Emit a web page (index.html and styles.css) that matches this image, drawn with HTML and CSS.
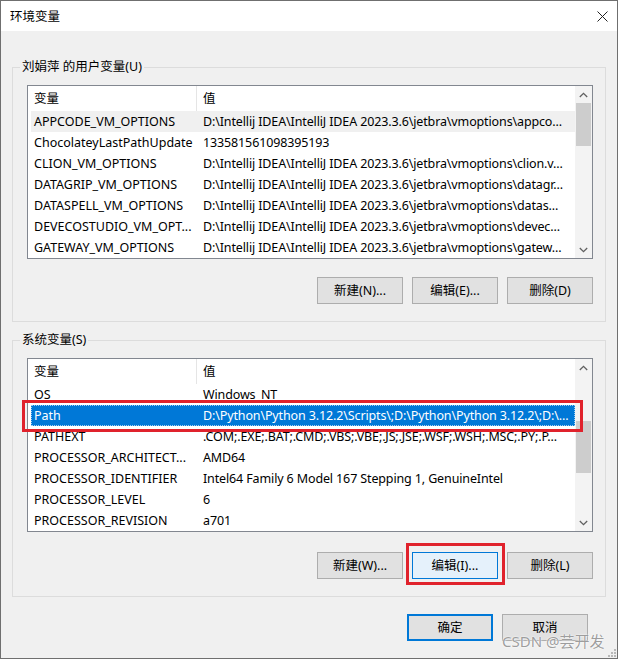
FILE: index.html
```html
<!DOCTYPE html>
<html lang="zh-CN">
<head>
<meta charset="utf-8">
<title>环境变量</title>
<link rel="stylesheet" href="styles.css">
</head>
<body>
<div class="window">
  <div class="titlebar">
    <span class="title">环境变量</span>
    <svg class="close" width="11" height="11" viewBox="0 0 11 11"><path d="M0.5 0.5 L10.5 10.5 M10.5 0.5 L0.5 10.5" stroke="#222" stroke-width="1" fill="none"/></svg>
  </div>
  <div class="content">
    <fieldset class="group">
      <legend>刘娟萍 的用户变量(U)</legend>
      <div class="list">
        <div class="list-main">
          <div class="hdr"><div class="c1">变量</div><div class="c2">值</div></div>
          <div class="row hover"><div class="c1">APPCODE_VM_OPTIONS</div><div class="c2">D:\Intellij IDEA\IntelliJ IDEA 2023.3.6\jetbra\vmoptions\appco...</div></div>
          <div class="row"><div class="c1">ChocolateyLastPathUpdate</div><div class="c2">133581561098395193</div></div>
          <div class="row"><div class="c1">CLION_VM_OPTIONS</div><div class="c2">D:\Intellij IDEA\IntelliJ IDEA 2023.3.6\jetbra\vmoptions\clion.v...</div></div>
          <div class="row"><div class="c1">DATAGRIP_VM_OPTIONS</div><div class="c2">D:\Intellij IDEA\IntelliJ IDEA 2023.3.6\jetbra\vmoptions\datagr...</div></div>
          <div class="row"><div class="c1">DATASPELL_VM_OPTIONS</div><div class="c2">D:\Intellij IDEA\IntelliJ IDEA 2023.3.6\jetbra\vmoptions\datas...</div></div>
          <div class="row"><div class="c1">DEVECOSTUDIO_VM_OPT...</div><div class="c2">D:\Intellij IDEA\IntelliJ IDEA 2023.3.6\jetbra\vmoptions\devec...</div></div>
          <div class="row"><div class="c1">GATEWAY_VM_OPTIONS</div><div class="c2">D:\Intellij IDEA\IntelliJ IDEA 2023.3.6\jetbra\vmoptions\gatew...</div></div>
        </div>
        <div class="sb">
          <div class="arrow"><svg width="9" height="6" viewBox="0 0 9 6"><path d="M0.8 5 L4.5 1.3 L8.2 5" stroke="#606060" stroke-width="1.3" fill="none"/></svg></div>
          <div class="track"><div class="thumb thumb-user"></div></div>
          <div class="arrow"><svg width="9" height="6" viewBox="0 0 9 6"><path d="M0.8 1 L4.5 4.7 L8.2 1" stroke="#606060" stroke-width="1.3" fill="none"/></svg></div>
        </div>
      </div>
      <div class="btns btns-user">
        <button class="btn">新建(N)...</button>
        <button class="btn">编辑(E)...</button>
        <button class="btn">删除(D)</button>
      </div>
    </fieldset>

    <fieldset class="group group-sys">
      <legend>系统变量(S)</legend>
      <div class="list">
        <div class="list-main">
          <div class="hdr"><div class="c1">变量</div><div class="c2">值</div></div>
          <div class="row"><div class="c1">OS</div><div class="c2">Windows_NT</div></div>
          <div class="row selected"><div class="c1">Path</div><div class="c2">D:\Python\Python 3.12.2\Scripts\;D:\Python\Python 3.12.2\;D:\...</div></div>
          <div class="row"><div class="c1">PATHEXT</div><div class="c2">.COM;.EXE;.BAT;.CMD;.VBS;.VBE;.JS;.JSE;.WSF;.WSH;.MSC;.PY;.P...</div></div>
          <div class="row"><div class="c1">PROCESSOR_ARCHITECT...</div><div class="c2">AMD64</div></div>
          <div class="row"><div class="c1">PROCESSOR_IDENTIFIER</div><div class="c2">Intel64 Family 6 Model 167 Stepping 1, GenuineIntel</div></div>
          <div class="row"><div class="c1">PROCESSOR_LEVEL</div><div class="c2">6</div></div>
          <div class="row"><div class="c1">PROCESSOR_REVISION</div><div class="c2">a701</div></div>
        </div>
        <div class="sb">
          <div class="arrow"><svg width="9" height="6" viewBox="0 0 9 6"><path d="M0.8 5 L4.5 1.3 L8.2 5" stroke="#606060" stroke-width="1.3" fill="none"/></svg></div>
          <div class="track"><div class="thumb thumb-sys"></div></div>
          <div class="arrow"><svg width="9" height="6" viewBox="0 0 9 6"><path d="M0.8 1 L4.5 4.7 L8.2 1" stroke="#606060" stroke-width="1.3" fill="none"/></svg></div>
        </div>
      </div>
      <div class="btns btns-sys">
        <button class="btn">新建(W)...</button>
        <button class="btn btn-hot">编辑(I)...</button>
        <button class="btn">删除(L)</button>
      </div>
    </fieldset>

    <div class="footer">
      <button class="btn btn-default">确定</button>
      <button class="btn">取消</button>
    </div>
  </div>

  <div class="mark mark-path"></div>
  <div class="mark mark-edit"></div>
  <div class="watermark">CSDN @芸开发</div>
  <svg class="grip" width="8" height="8" viewBox="0 0 8 8">
    <rect x="6" y="0" width="2" height="2" fill="#b8b8b8"/>
    <rect x="3" y="3" width="2" height="2" fill="#b8b8b8"/>
    <rect x="6" y="3" width="2" height="2" fill="#b8b8b8"/>
    <rect x="0" y="6" width="2" height="2" fill="#b8b8b8"/>
    <rect x="3" y="6" width="2" height="2" fill="#b8b8b8"/>
    <rect x="6" y="6" width="2" height="2" fill="#b8b8b8"/>
  </svg>
</div>
</body>
</html>
```

FILE: styles.css
```css
* { box-sizing: border-box; }
html, body { margin: 0; padding: 0; }
body {
  width: 618px;
  height: 659px;
  overflow: hidden;
  background: #f0f0f0;
  font-family: "Noto Sans", "Noto Sans CJK SC", sans-serif;
  font-size: 12.5px;
  color: #000;
}
.window {
  position: relative;
  width: 618px;
  height: 659px;
  border: 1px solid #6f6f6f;
  display: flex;
  flex-direction: column;
  background: #f0f0f0;
}
.titlebar {
  height: 30px;
  flex: none;
  background: #fff;
  display: flex;
  align-items: center;
  justify-content: space-between;
  padding: 2px 9px 0 9px;
}
.title { line-height: 16px; }
.close { display: block; margin-top: -2px; }

.content {
  flex: 1;
  display: flex;
  flex-direction: column;
}
.group {
  margin: 28px 11px 0 11px;
  border: 1px solid #dcdcdc;
  padding: 10px 12px 17px 14px;
  min-width: 0;
}
.group-sys { margin-top: 10px; }
.group legend {
  margin-left: -7px;
  padding: 0 2px;
  line-height: 16px;
  height: 16px;
}

.list {
  height: 174px;
  border: 1px solid #828790;
  background: #fff;
  display: flex;
}
.list-main {
  flex: 1;
  min-width: 0;
  overflow: hidden;
}
.hdr {
  height: 25px;
  display: flex;
  align-items: stretch;
}
.hdr .c1 {
  width: 169px;
  flex: none;
  padding-left: 6px;
  border-right: 1px solid #e5e5e5;
  line-height: 25px;
}
.hdr .c2 {
  flex: 1;
  padding-left: 6px;
  line-height: 25px;
}
.row {
  height: 21px;
  margin-left: 3px;
  display: flex;
  line-height: 22px;
  white-space: nowrap;
}
.row .c1 {
  width: 166px;
  flex: none;
  padding-left: 3px;
  overflow: hidden;
}
.row .c2 {
  flex: 1;
  padding-left: 6px;
  overflow: hidden;
  letter-spacing: -0.13px;
}
.row.hover { background: #f0f0f0; }
.row.selected {
  background: #0078d7;
  color: #fff;
  outline: 1px dotted #9fcdf2;
  outline-offset: -1px;
}

.sb {
  width: 17px;
  flex: none;
  background: #f3f3f3;
  display: flex;
  flex-direction: column;
}
.arrow {
  height: 17px;
  flex: none;
  display: flex;
  align-items: center;
  justify-content: center;
}
.arrow svg { display: block; }
.track {
  flex: 1;
  padding: 0 1px;
}
.thumb { background: #cdcdcd; }
.thumb-user { height: 43px; margin-top: 0; }
.thumb-sys { height: 52px; margin-top: 45px; }

.btns {
  display: flex;
  justify-content: flex-end;
  gap: 9px;
  margin-top: 18px;
}
.btns-sys { margin-top: 20px; }
.btn {
  width: 86px;
  height: 27px;
  border: 1px solid #adadad;
  background: #e1e1e1;
  font: inherit;
  color: #000;
  padding: 0;
  line-height: 25px;
  text-align: center;
}
.btn-hot {
  background: #e5f1fb;
  border-color: #0078d7;
}
.btn-default {
  border: 2px solid #0078d7;
  line-height: 23px;
}
.footer {
  display: flex;
  justify-content: flex-end;
  gap: 9px;
  margin-top: 17px;
  padding-right: 29px;
}

.mark {
  position: absolute;
  border: 3px solid #e0222c;
}
.mark-path { left: 21px; top: 399px; width: 561px; height: 32px; }
.mark-edit { left: 405px; top: 542px; width: 99px; height: 42px; }

.watermark {
  position: absolute;
  left: 501px;
  top: 630px;
  font-size: 15px;
  line-height: 20px;
  color: rgba(140, 140, 140, 0.85);
  text-shadow: 0 0 2px #fff, 0 0 1px #fff;
  white-space: nowrap;
}
.grip {
  position: absolute;
  right: 1px;
  bottom: 1px;
}
```
